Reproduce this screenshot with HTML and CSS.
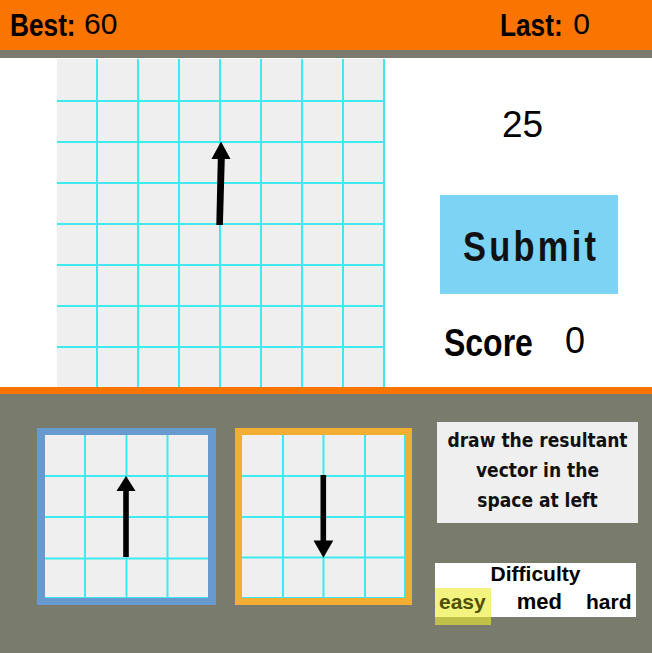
FILE: index.html
```html
<!DOCTYPE html>
<html>
<head>
<meta charset="utf-8">
<link rel="stylesheet" href="styles.css">
</head>
<body>
<div class="page">
  <header class="topbar">
    <div class="stat">
      <span class="stat-label w-best"><span class="squeeze">Best:</span></span>
      <span class="stat-value">60</span>
    </div>
    <div class="stat">
      <span class="stat-label w-last"><span class="squeeze">Last:</span></span>
      <span class="stat-value">0</span>
    </div>
  </header>

  <main class="main">
    <svg class="big-grid" width="328" height="328" viewBox="0 0 328 328">
      <rect width="328" height="328" fill="#efefef"/>
      <g stroke="#3ee9f0" stroke-width="2">
        <line x1="40" y1="0" x2="40" y2="328"/>
        <line x1="81" y1="0" x2="81" y2="328"/>
        <line x1="122" y1="0" x2="122" y2="328"/>
        <line x1="163" y1="0" x2="163" y2="328"/>
        <line x1="204" y1="0" x2="204" y2="328"/>
        <line x1="245" y1="0" x2="245" y2="328"/>
        <line x1="286" y1="0" x2="286" y2="328"/>
        <line x1="327" y1="0" x2="327" y2="328"/>
        <line x1="0" y1="42" x2="328" y2="42"/>
        <line x1="0" y1="83" x2="328" y2="83"/>
        <line x1="0" y1="124" x2="328" y2="124"/>
        <line x1="0" y1="165" x2="328" y2="165"/>
        <line x1="0" y1="206" x2="328" y2="206"/>
        <line x1="0" y1="247" x2="328" y2="247"/>
        <line x1="0" y1="288" x2="328" y2="288"/>
      </g>
      <polygon points="164,82.5 173.5,100 154.5,100" fill="#000"/>
      <polygon points="160.8,99 167.8,99 165.9,166 159.3,166" fill="#000"/>
    </svg>

    <div class="side">
      <div class="timer">25</div>
      <button class="submit"><span class="submit-text">Submit</span></button>
      <div class="score">
        <span class="score-label"><span class="squeeze">Score</span></span>
        <span class="score-value">0</span>
      </div>
    </div>
  </main>

  <section class="bottom">
    <div class="vec vec-blue">
      <svg width="163" height="163" viewBox="0 0 163 163">
        <rect width="163" height="163" fill="#efefef"/>
        <g stroke="#3ee9f0" stroke-width="2">
          <line x1="40" y1="0" x2="40" y2="163"/>
          <line x1="81.5" y1="0" x2="81.5" y2="163"/>
          <line x1="122.5" y1="0" x2="122.5" y2="163"/>
          <line x1="0" y1="41" x2="163" y2="41"/>
          <line x1="0" y1="82" x2="163" y2="82"/>
          <line x1="0" y1="123.5" x2="163" y2="123.5"/>
        </g>
        <g stroke="#3ee9f0" stroke-width="1">
          <line x1="0" y1="162.5" x2="163" y2="162.5"/>
        </g>
        <polygon points="81,41 90.5,56 71.5,56" fill="#000"/>
        <rect x="78.2" y="55" width="5.6" height="67" fill="#000"/>
      </svg>
    </div>
    <div class="vec vec-orange">
      <svg width="163" height="163" viewBox="0 0 163 163">
        <rect width="163" height="163" fill="#efefef"/>
        <g stroke="#3ee9f0" stroke-width="2">
          <line x1="41" y1="0" x2="41" y2="163"/>
          <line x1="81.5" y1="0" x2="81.5" y2="163"/>
          <line x1="123" y1="0" x2="123" y2="163"/>
          <line x1="0" y1="41" x2="163" y2="41"/>
          <line x1="0" y1="82" x2="163" y2="82"/>
          <line x1="0" y1="122.5" x2="163" y2="122.5"/>
        </g>
        <g stroke="#3ee9f0" stroke-width="1">
          <line x1="0" y1="162.5" x2="163" y2="162.5"/>
          <line x1="162.5" y1="0" x2="162.5" y2="163"/>
        </g>
        <rect x="78.5" y="40" width="5.6" height="67" fill="#000"/>
        <polygon points="71.5,105.5 91.3,105.5 81.4,122.8" fill="#000"/>
      </svg>
    </div>
    <div class="panel">
      <div class="hint">draw the resultant<br>vector in the<br>space at left</div>
      <div class="difficulty">
        <div class="diff-title">Difficulty</div>
        <div class="diff-row">
          <span class="diff-opt diff-active">easy</span>
          <span class="diff-opt diff-med">med</span>
          <span class="diff-opt diff-hard">hard</span>
        </div>
      </div>
    </div>
  </section>
</div>
</body>
</html>
```

FILE: styles.css
```css
* { box-sizing: border-box; }

html, body {
  margin: 0;
  padding: 0;
}

body {
  width: 652px;
  height: 653px;
  overflow: hidden;
  font-family: "Liberation Sans", Arial, sans-serif;
  background: #797b6c;
}

.page {
  width: 652px;
  height: 653px;
  display: flex;
  flex-direction: column;
}

/* condensed look: Liberation Sans Bold squeezed horizontally */
.squeeze {
  display: inline-block;
  white-space: nowrap;
  transform: scaleX(0.82);
  transform-origin: left center;
}

.topbar {
  height: 58px;
  background: #f97400;
  border-bottom: 8px solid #7a7b6c;
  display: flex;
  justify-content: space-between;
  align-items: flex-start;
  padding: 9px 62px 0 10px;
  color: #000;
}

.stat {
  display: flex;
  align-items: flex-start;
  gap: 8px;
}

.stat-label {
  display: block;
  font-weight: bold;
  font-size: 32px;
  line-height: 32px;
  white-space: nowrap;
}

.w-best { width: 66px; }
.w-last { width: 65px; }

.stat-value {
  font-size: 30px;
  line-height: 30px;
}

.main {
  height: 336px;
  background: #ffffff;
  border-bottom: 7px solid #f97400;
  display: flex;
  align-items: flex-start;
  padding: 1px 0 0 57px;
}

.big-grid {
  display: block;
  flex: none;
}

.side {
  margin-left: 55px;
  width: 178px;
  display: flex;
  flex-direction: column;
}

.timer {
  margin-top: 48px;
  padding-left: 62px;
  font-size: 37px;
  line-height: 36px;
  color: #000;
}

.submit {
  margin-top: 52px;
  width: 178px;
  height: 99px;
  border: none;
  padding: 4px 0 0 4px;
  background: #7dd3f3;
  color: #111;
  display: flex;
  align-items: center;
  justify-content: center;
  font-family: "Liberation Sans", Arial, sans-serif;
  font-weight: bold;
  font-size: 42px;
  line-height: 42px;
}

.submit-text {
  display: inline-block;
  white-space: nowrap;
  letter-spacing: 4px;
  transform: scaleX(0.82);
  transform-origin: center center;
}

.score {
  margin-top: 29px;
  display: flex;
  align-items: flex-start;
}

.score-label {
  display: block;
  width: 89px;
  margin-left: 4px;
  font-weight: bold;
  font-size: 39px;
  line-height: 39px;
  white-space: nowrap;
}

.score-value {
  margin-left: 32px;
  font-size: 36px;
  line-height: 36px;
}

.bottom {
  flex: 1;
  background: #797b6c;
  display: flex;
  align-items: flex-start;
  padding: 28px 0 0 37px;
}

.vec {
  margin-top: 6px;
  flex: none;
}

.vec svg {
  display: block;
}

.vec-blue {
  border-style: solid;
  border-color: #6899cf;
  border-width: 7px 8px 7px 8px;
}

.vec-orange {
  margin-left: 19px;
  border: 7px solid #f2ae32;
}

.panel {
  margin-left: 25px;
  display: flex;
  flex-direction: column;
}

.hint {
  width: 201px;
  height: 101px;
  background: #efefef;
  padding-top: 3px;
  text-align: center;
  font-family: "DejaVu Sans Condensed", "DejaVu Sans", sans-serif;
  font-weight: bold;
  font-size: 19px;
  line-height: 30px;
  color: #111;
}

.difficulty {
  margin-top: 40px;
  margin-left: -2px;
  width: 201px;
  height: 54px;
  background: #ffffff;
  display: flex;
  flex-direction: column;
  font-weight: bold;
  font-size: 21px;
  color: #000;
}

.diff-title {
  text-align: center;
  line-height: 22px;
  height: 22px;
  font-size: 21px;
}

.diff-row {
  margin-top: 3px;
  display: flex;
  align-items: flex-start;
}

.diff-opt {
  line-height: 26px;
  padding-top: 1px;
}

.diff-active {
  padding: 1px 5px 10px 4px;
  background: rgba(236, 236, 50, 0.62);
  color: #4f5000;
}

.diff-med {
  margin-left: 26px;
  font-size: 22px;
}

.diff-hard {
  margin-left: 24px;
  font-size: 21px;
}
```
